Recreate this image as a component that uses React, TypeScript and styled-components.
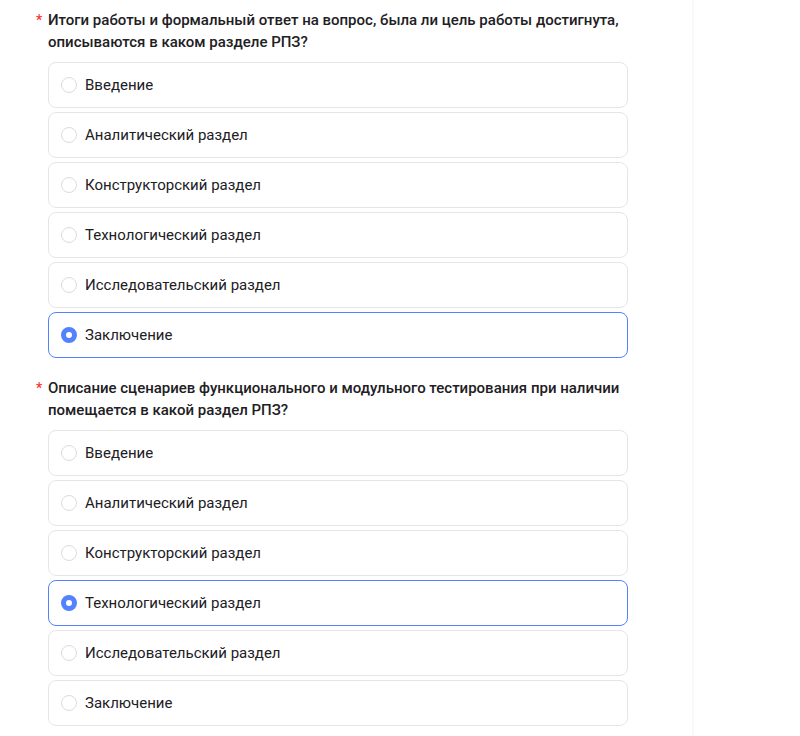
import * as React from "react";
import styled, { createGlobalStyle } from "styled-components";

const GlobalStyle = createGlobalStyle`
  html, body {
    margin: 0;
    padding: 0;
    background: #ffffff;
  }
  body {
    font-family: Roboto, "Noto Sans", sans-serif;
    color: #21201f;
  }
`;

const Page = styled.div`
  display: flex;
  min-height: 736px;
  background: #ffffff;
`;

const Panel = styled.div`
  width: 692px;
  box-sizing: border-box;
  padding: 9px 0 0 36px;
  background: #ffffff;
  box-shadow: 1px 0 3px rgba(0, 0, 0, 0.06);
  position: relative;
  z-index: 1;
`;

const Aside = styled.div`
  flex: 1;
  background: #ffffff;
`;

const Question = styled.section`
  margin-bottom: 19px;
`;

const Title = styled.div`
  display: flex;
  font-size: 15px;
  line-height: 22px;
  font-weight: 500;
  color: #21201f;
  margin-bottom: 9px;
`;

const Star = styled.span`
  width: 12px;
  flex: none;
  color: #f33;
  font-size: 14px;
  line-height: 20px;
  padding-top: 1px;
`;

const Options = styled.div`
  display: flex;
  flex-direction: column;
  gap: 4px;
  margin-left: 12px;
  width: 580px;
`;

const Option = styled.label<{ $checked: boolean }>`
  display: flex;
  align-items: center;
  gap: 8px;
  height: 46px;
  box-sizing: border-box;
  padding-left: 12px;
  border: 1px solid ${(p) => (p.$checked ? "#5282ff" : "#e6e6e6")};
  border-radius: 8px;
  font-size: 15px;
  color: #21201f;
  cursor: pointer;
`;

const Radio = styled.span<{ $checked: boolean }>`
  width: 16px;
  height: 16px;
  box-sizing: border-box;
  border-radius: 50%;
  flex: none;
  border: ${(p) => (p.$checked ? "5px solid #5282ff" : "1px solid #dcdcdc")};
  background: #ffffff;
`;

const answers = [
  "Введение",
  "Аналитический раздел",
  "Конструкторский раздел",
  "Технологический раздел",
  "Исследовательский раздел",
  "Заключение",
];

const questions = [
  {
    text: "Итоги работы и формальный ответ на вопрос, была ли цель работы достигнута, описываются в каком разделе РПЗ?",
    picked: 5,
  },
  {
    text: "Описание сценариев функционального и модульного тестирования при наличии помещается в какой раздел РПЗ?",
    picked: 3,
  },
];

export default function App() {
  const [picks, setPicks] = React.useState(questions.map((q) => q.picked));
  return (
    <Page>
      <GlobalStyle />
      <Panel>
        {questions.map((q, qi) => (
          <Question key={qi}>
            <Title>
              <Star>*</Star>
              <span>{q.text}</span>
            </Title>
            <Options>
              {answers.map((a, ai) => {
                const checked = picks[qi] === ai;
                return (
                  <Option
                    key={a}
                    $checked={checked}
                    onClick={() =>
                      setPicks(picks.map((p, i) => (i === qi ? ai : p)))
                    }
                  >
                    <Radio $checked={checked} />
                    {a}
                  </Option>
                );
              })}
            </Options>
          </Question>
        ))}
      </Panel>
      <Aside />
    </Page>
  );
}
